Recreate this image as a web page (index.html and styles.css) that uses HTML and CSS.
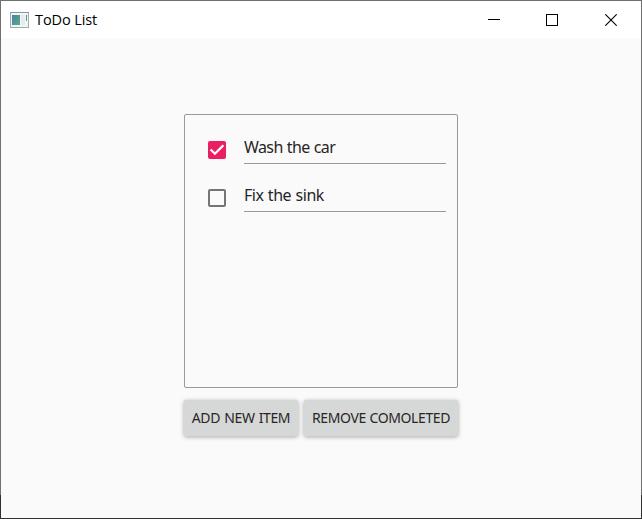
FILE: index.html
```
<!DOCTYPE html>
<html lang="en">
<head>
<meta charset="utf-8">
<title>ToDo List</title>
<link rel="stylesheet" href="styles.css">
</head>
<body>
<div class="window">
  <header class="titlebar">
    <svg class="app-icon" width="19" height="16" viewBox="0 0 19 16">
      <defs>
        <linearGradient id="pane" x1="0" y1="0" x2="1" y2="1">
          <stop offset="0" stop-color="#4a80a8"/>
          <stop offset="1" stop-color="#5aae80"/>
        </linearGradient>
      </defs>
      <rect x=".5" y=".5" width="18" height="15" fill="#f3f5f6" stroke="#a4abb0"/>
      <path d="M0 .5H19" stroke="#8d969d"/>
      <rect x="2" y="3" width="8" height="10" fill="url(#pane)"/>
      <rect x="11" y="3" width="4" height="10" fill="#e6ecee"/>
      <rect x="16" y="3" width="1" height="6" fill="url(#pane)"/>
    </svg>
    <h1 class="title">ToDo List</h1>
    <div class="controls">
      <svg width="12" height="12" viewBox="0 0 12 12"><path d="M0 5.5H12" stroke="#000"/></svg>
      <svg width="12" height="12" viewBox="0 0 12 12"><rect x=".5" y=".5" width="11" height="11" fill="none" stroke="#000"/></svg>
      <svg width="12" height="12" viewBox="0 0 12 12"><path d="M.3 .3L11.7 11.7M11.7 .3L.3 11.7" stroke="#000" stroke-width="1.1"/></svg>
    </div>
  </header>
  <main class="content">
    <ul class="list">
      <li class="item">
        <svg width="18" height="18" viewBox="0 0 18 18"><rect width="18" height="18" rx="2" fill="#e91e63"/><path d="M2.6 8.5L6.9 12.7L15.4 4.2" fill="none" stroke="#fff" stroke-width="2.3"/></svg>
        <span class="field wash">Wash the car</span>
      </li>
      <li class="item">
        <svg width="18" height="18" viewBox="0 0 18 18"><rect x="1" y="1" width="16" height="16" rx="1" fill="none" stroke="#757575" stroke-width="2"/></svg>
        <span class="field fix">Fix the sink</span>
      </li>
    </ul>
    <div class="actions">
      <button class="button add">ADD NEW ITEM</button>
      <button class="button remove">REMOVE COMOLETED</button>
    </div>
  </main>
</div>
</body>
</html>
```
FILE: styles.css
```
* { box-sizing: border-box; }
body { margin: 0; }
.window {
  width: 642px;
  height: 519px;
  padding: 1px;
  background: linear-gradient(#707070 0 495px, #303030 495px);
  display: flex;
  flex-direction: column;
  font-family: "Noto Sans", sans-serif;
  color: #262626;
}
.titlebar {
  height: 37px;
  flex: none;
  display: flex;
  align-items: center;
  padding: 0 24px 0 9px;
  background: #fff;
}
.title {
  margin: 0 auto 0 6px;
  font: 400 14.5px/20px "Open Sans", sans-serif;
  letter-spacing: -0.1px;
  color: #000;
}
.controls {
  width: 129px;
  display: grid;
  grid-template-columns: 58px 59px 12px;
}
.controls svg, .app-icon { display: block; }
.content {
  flex: 1;
  display: flex;
  flex-direction: column;
  align-items: center;
  padding-top: 76px;
  background: #fafafa;
}
.list {
  width: 274px;
  height: 274px;
  margin: 0;
  padding: 11px 11px 0 23px;
  border: 1px solid #999;
  border-radius: 2px;
  list-style: none;
}
.item {
  height: 48px;
  display: flex;
  align-items: center;
  gap: 18px;
}
.field {
  flex: 1;
  height: 28px;
  margin-top: -1px;
  border-bottom: 1px solid #999;
  font-size: 16px;
  line-height: 22px;
  white-space: nowrap;
}
.wash { letter-spacing: -0.6px; word-spacing: 0.5px; }
.fix { letter-spacing: -0.45px; word-spacing: 0.6px; }
.actions { display: flex; gap: 6px; margin-top: 12px; }
.button {
  height: 36px;
  padding: 0;
  border: 0;
  border-radius: 2px;
  background: #d6d7d7;
  box-shadow: 0 1px 4px rgba(0, 0, 0, .34);
  font: 400 14px/20px "Noto Sans", sans-serif;
  color: #262626;
  white-space: nowrap;
}
.add { width: 114px; letter-spacing: -0.4px; word-spacing: 1px; }
.remove { width: 154px; letter-spacing: -0.4px; word-spacing: 0.5px; }
```
